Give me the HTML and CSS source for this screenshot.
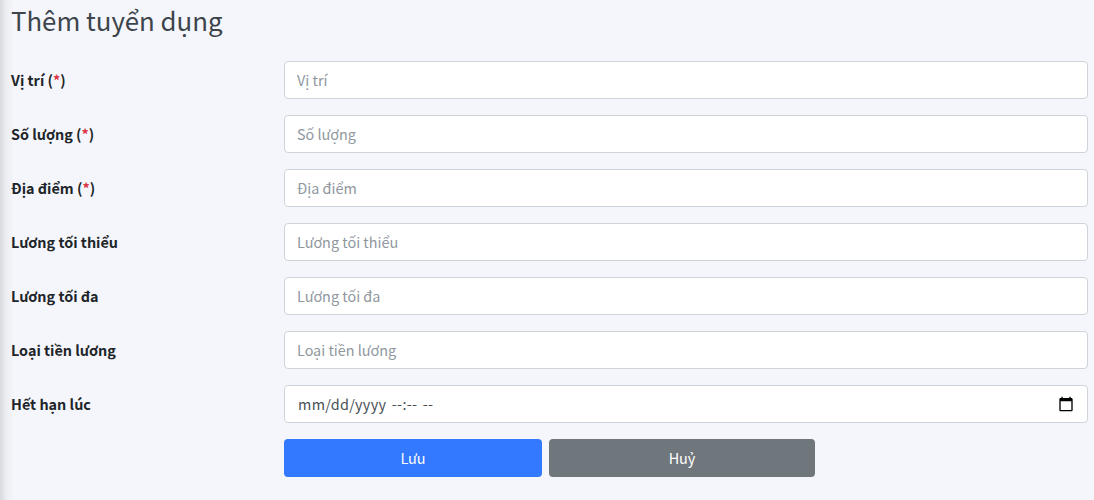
FILE: index.html
```html
<!DOCTYPE html>
<html lang="vi">
<head>
  <meta charset="UTF-8" />
  <meta name="viewport" content="width=device-width, initial-scale=1.0" />
  <title>Thêm tuyển dụng</title>
  <link rel="stylesheet" href="styles.css">
</head>
<body>
  <div class="side-shadow"></div>
  <main class="content">
    <h1 class="page-title">Thêm tuyển dụng</h1>
    <form class="job-form">
      <div class="form-row">
        <label class="form-label" for="position">Vị trí (<span class="required">*</span>)</label>
        <input class="form-control" id="position" type="text" placeholder="Vị trí">
      </div>
      <div class="form-row">
        <label class="form-label" for="quantity">Số lượng (<span class="required">*</span>)</label>
        <input class="form-control" id="quantity" type="text" placeholder="Số lượng">
      </div>
      <div class="form-row">
        <label class="form-label" for="location">Địa điểm (<span class="required">*</span>)</label>
        <input class="form-control" id="location" type="text" placeholder="Địa điểm">
      </div>
      <div class="form-row">
        <label class="form-label" for="salaryMin">Lương tối thiểu</label>
        <input class="form-control" id="salaryMin" type="text" placeholder="Lương tối thiểu">
      </div>
      <div class="form-row">
        <label class="form-label" for="salaryMax">Lương tối đa</label>
        <input class="form-control" id="salaryMax" type="text" placeholder="Lương tối đa">
      </div>
      <div class="form-row">
        <label class="form-label" for="salaryType">Loại tiền lương</label>
        <input class="form-control" id="salaryType" type="text" placeholder="Loại tiền lương">
      </div>
      <div class="form-row">
        <label class="form-label" for="expiresAt">Hết hạn lúc</label>
        <div class="date-field">
          <input class="form-control date-input" id="expiresAt" type="text" value="mm/dd/yyyy --:-- --">
          <svg class="date-icon" viewBox="0 0 24 24" width="16" height="16" aria-hidden="true">
            <path d="M20 3h-1V1h-2v2H7V1H5v2H4c-1.1 0-2 .9-2 2v16c0 1.100.9 2 2 2h16c1.100 0 2-.9 2-2V5c0-1.100-.9-2-2-2zm0 18H4V8h16v13z"/>
          </svg>
        </div>
      </div>
      <div class="form-actions">
        <button class="btn btn-save" type="submit">Lưu</button>
        <button class="btn btn-cancel" type="button">Huỷ</button>
      </div>
    </form>
  </main>
</body>
</html>
```

FILE: styles.css
```css
* {
  box-sizing: border-box;
}
html, body {
  height: 100%;
}
body {
  margin: 0;
  position: relative;
  overflow: hidden;
  background: #f4f6fb;
  color: #212529;
  font-family: "Noto Sans CJK SC", "Noto Sans", sans-serif;
  font-size: 14.4px;
}
/* Shadow from the sidebar, off the left edge */
.side-shadow {
  position: absolute;
  top: 0;
  left: 0;
  bottom: 0;
  width: 14px;
  background: linear-gradient(90deg, #d8d9dc, #eceef2 45%, #f4f6fb);
}
.content {
  position: relative;
  padding: 0 6px 0 11px;
}
.page-title {
  margin: 0;
  height: 61px;
  font-size: 25.8px;
  font-weight: 400;
  line-height: 40px;
  color: #3d444b;
}
.form-row {
  display: flex;
  align-items: center;
  margin-bottom: 16px;
}
.form-label {
  flex: 0 0 273px;
  padding-bottom: 2px;
  font-size: 14.4px;
  font-weight: 700;
}
.required {
  color: #dc3545;
}
.form-control {
  flex: 1;
  height: 38px;
  padding: 5px 12px 7px;
  background: #fff;
  border: 1px solid #ced4da;
  border-radius: 4px;
  font-family: inherit;
  font-size: 14.4px;
  color: #495057;
}
.form-control::placeholder {
  color: #8f979e;
}
.date-field {
  flex: 1;
  display: flex;
  position: relative;
}
.date-input {
  padding-left: 13px;
  letter-spacing: 0.3px;
  word-spacing: 2px;
}
.date-icon {
  position: absolute;
  top: 11px;
  right: 14px;
}
.form-actions {
  display: flex;
  gap: 7px;
  margin-left: 273px;
}
.btn {
  height: 38px;
  padding-bottom: 3px;
  border: none;
  border-radius: 4px;
  color: #fff;
  font-family: inherit;
  font-size: 14.4px;
}
.btn-save {
  width: 258px;
  background: #3379ff;
}
.btn-cancel {
  width: 266px;
  background: #6f767c;
}
```
